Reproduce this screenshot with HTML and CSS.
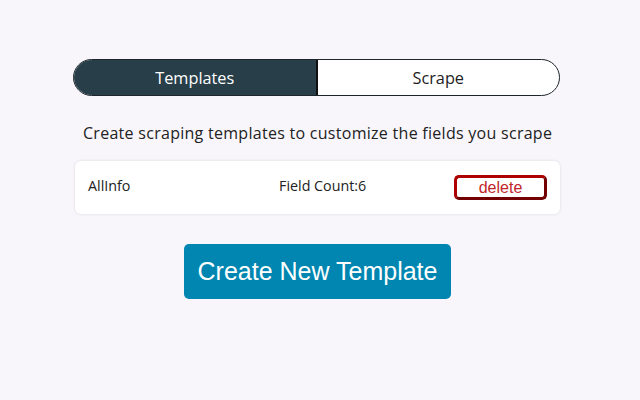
FILE: index.html
```html
<!DOCTYPE html>
<html>
<head>
<meta charset="utf-8">
<link rel="stylesheet" href="styles.css">
</head>
<body>
<div class="page">
  <div class="toggle">
    <div class="tab active">Templates</div>
    <div class="tab">Scrape</div>
  </div>
  <p class="intro">Create scraping templates to customize the fields you scrape</p>
  <div class="card">
    <span class="name">AllInfo</span>
    <span class="count">Field Count:6</span>
    <button class="delete">delete</button>
  </div>
  <div class="actions">
    <button class="create">Create New Template</button>
  </div>
</div>
</body>
</html>
```
FILE: styles.css
```css
html, body {
  margin: 0;
  padding: 0;
  background: #f8f6fb;
  font-family: "Open Sans", "Noto Sans", sans-serif;
  color: #222;
}
.page {
  width: 487px;
  margin: 0 0 0 73px;
  padding-top: 59px;
}
.toggle {
  display: flex;
  height: 37px;
  border: 1px solid #1d262b;
  border-radius: 19px;
  overflow: hidden;
  background: #fff;
  box-sizing: border-box;
}
.tab {
  flex: 1;
  display: flex;
  align-items: center;
  justify-content: center;
  font-size: 16.3px;
  color: #222;
}
.tab.active {
  background: #283f4a;
  color: #fff;
  border-right: 2px solid #111;
}
.intro {
  margin: 25px 0 0 10px;
  font-size: 16px;
  letter-spacing: 0.28px;
  color: #222;
  line-height: 24px;
  white-space: nowrap;
}
.card {
  margin: 16px 0 0 2px;
  width: 485px;
  height: 53px;
  background: #fff;
  border-radius: 6px;
  box-shadow: 0 0 3px rgba(0,0,0,0.12);
  display: flex;
  align-items: center;
  padding: 0 13px 0 13px;
  box-sizing: border-box;
  font-size: 14.3px;
}
.name {
  width: 191px;
  margin-bottom: 5px;
}
.count {
  flex: 1;
  margin-bottom: 5px;
}
.delete {
  width: 93px;
  height: 25px;
  border: 3px solid #720000;
  border-top-color: #ad0000;
  border-left-color: #ad0000;
  border-radius: 5px;
  background: #fff;
  color: #c0262b;
  font-family: "Liberation Sans", Arial, sans-serif;
  font-size: 16px;
  line-height: 18px;
  padding: 0;
}
.actions {
  display: flex;
  justify-content: center;
  margin-top: 30px;
  padding-left: 2px;
}
.create {
  width: 267px;
  height: 55px;
  background: #0086b0;
  color: #fff;
  border: none;
  border-radius: 5px;
  font-family: "Liberation Sans", Arial, sans-serif;
  font-size: 25px;
  padding: 0;
}
```
